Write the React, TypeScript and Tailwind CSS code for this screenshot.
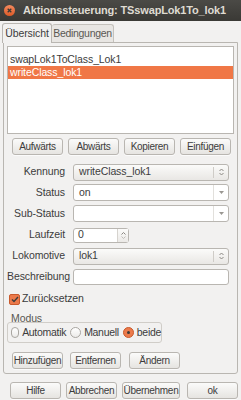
import React from "react";

const font = { fontFamily: '"Liberation Sans", Arial, sans-serif' };

function Btn({ children, w }: { children: React.ReactNode; w: string }) {
  return (
    <div
      className={`${w} h-[17px] flex items-center justify-center rounded-[3px] border border-[#b9b6b1] bg-gradient-to-b from-[#fbfbfa] to-[#e6e4e1] text-[#3c3c3c] text-[10px] tracking-[-0.3px] whitespace-nowrap shadow-[0_1px_0_rgba(255,255,255,0.7)]`}
    >
      {children}
    </div>
  );
}

function UpDown() {
  return (
    <svg width="5" height="8" viewBox="0 0 5 8">
      <path d="M0.5 3 L2.5 1 L4.5 3" fill="none" stroke="#8a8782" strokeWidth="1" />
      <path d="M0.5 5 L2.5 7 L4.5 5" fill="none" stroke="#8a8782" strokeWidth="1" />
    </svg>
  );
}

function Combo({ text }: { text: string }) {
  return (
    <div className="w-[156px] h-[17px] flex items-center rounded-[3px] border border-[#b9b6b1] bg-gradient-to-b from-[#fbfbfa] to-[#e9e7e4] text-[#3c3c3c]">
      <div className="flex-1 pl-[5px]">{text}</div>
      <div className="w-px h-[11px] bg-[#cfccc7]" />
      <div className="w-[14px] flex items-center justify-center">
        <UpDown />
      </div>
    </div>
  );
}

function EntryCombo({ text }: { text: string }) {
  return (
    <div className="w-[156px] h-[17px] flex items-center rounded-[3px] border border-[#b9b6b1] bg-white text-[#3c3c3c]">
      <div className="flex-1 pl-[5px]">{text}</div>
      <div className="w-[15px] h-full flex items-center justify-center border-l border-[#e2e0dc]">
        <svg width="5" height="3" viewBox="0 0 5 3">
          <path d="M0 0 L5 0 L2.5 3 Z" fill="#9a9792" />
        </svg>
      </div>
    </div>
  );
}

function Row({ label, children, h = "h-[20px]" }: { label: string; children: React.ReactNode; h?: string }) {
  return (
    <div className={`flex items-center ${h}`}>
      <div className="w-[66px] text-right text-[#3c3c3c] pr-[8px] whitespace-nowrap">{label}</div>
      {children}
    </div>
  );
}

function Radio({ checked }: { checked?: boolean }) {
  if (checked)
    return (
      <div className="w-[11px] h-[11px] rounded-full bg-[#ec7a4b] border border-[#c95a2c] flex items-center justify-center">
        <div className="w-[3px] h-[3px] rounded-full bg-[#3c3c3c]" />
      </div>
    );
  return <div className="w-[11px] h-[11px] rounded-full bg-gradient-to-b from-[#ffffff] to-[#ecebe9] border border-[#a9a6a1]" />;
}

export default function App() {
  return (
    <div
      className="w-[241px] h-[400px] bg-[#f2f1f0] flex flex-col text-[10.5px] tracking-[-0.1px] text-[#3c3c3c] overflow-hidden"
      style={font}
    >
      {/* Title bar */}
      <div className="h-[21px] shrink-0 flex items-center bg-gradient-to-b from-[#4b4a46] to-[#3a3935]">
        <div className="ml-[4px] w-[11px] h-[11px] rounded-full bg-gradient-to-b from-[#f58a5e] to-[#dd5a25] flex items-center justify-center">
          <svg width="5" height="5" viewBox="0 0 5 5">
            <path d="M0.7 0.7 L4.3 4.3 M4.3 0.7 L0.7 4.3" stroke="#3a3935" strokeWidth="1.3" />
          </svg>
        </div>
        <div className="ml-[8px] font-bold text-[#dfdbd2] text-[11px] tracking-[-0.15px] whitespace-nowrap">
          Aktionssteuerung: TSswapLok1To_lok1
        </div>
      </div>

      {/* Tabs */}
      <div className="flex items-end pl-[2px] mt-[1px] h-[20px] shrink-0">
        <div className="w-[50px] h-[20px] border border-b-0 border-[#b9b6b1] rounded-t-[3px] bg-[#f2f1f0] flex items-center justify-center relative top-px z-10">
          Übersicht
        </div>
        <div className="w-[62px] h-[18px] border border-b-0 border-l-0 border-[#c4c1bc] rounded-t-[3px] bg-[#e8e6e3] flex items-center justify-center text-[#5a5853] tracking-[-0.3px]">
          Bedingungen
        </div>
      </div>

      {/* Panel */}
      <div className="mx-[3px] h-[332px] shrink-0 border border-[#b9b6b1] rounded-b-[3px] flex flex-col px-[3px] pt-[3px]">
        {/* List */}
        <div className="h-[88px] border border-[#b9b6b1] bg-white flex flex-col pt-[6px]">
          <div className="h-[13px] flex items-center pl-[2px]">swapLok1ToClass_Lok1</div>
          <div className="h-[13px] flex items-center pl-[2px] bg-[#f07746] text-white">writeClass_lok1</div>
        </div>

        {/* Buttons row */}
        <div className="flex items-center mt-[4px] pl-[5px] gap-[5px]">
          <Btn w="w-[51px]">Aufwärts</Btn>
          <Btn w="w-[51px]">Abwärts</Btn>
          <Btn w="w-[51px]">Kopieren</Btn>
          <Btn w="w-[51px]">Einfügen</Btn>
        </div>

        {/* Form */}
        <div className="flex flex-col mt-[7px]">
          <Row label="Kennung">
            <Combo text="writeClass_lok1" />
          </Row>
          <Row label="Status" h="h-[21px]">
            <EntryCombo text="on" />
          </Row>
          <Row label="Sub-Status" h="h-[21px]">
            <EntryCombo text="" />
          </Row>
          <Row label="Laufzeit" h="h-[22px]">
            <div className="w-[56px] h-[15px] flex items-center rounded-[3px] border border-[#b9b6b1] bg-white">
              <div className="flex-1 pl-[4px]">0</div>
              <div className="w-[11px] h-full border-l border-[#d6d3ce] bg-gradient-to-b from-[#fbfbfa] to-[#ebe9e6] flex flex-col items-center justify-center gap-[1px]">
                <svg width="5" height="3" viewBox="0 0 5 3"><path d="M0.5 2.5 L2.5 0.5 L4.5 2.5" fill="none" stroke="#8a8782" /></svg>
                <svg width="5" height="3" viewBox="0 0 5 3"><path d="M0.5 0.5 L2.5 2.5 L4.5 0.5" fill="none" stroke="#c0bdb8" /></svg>
              </div>
            </div>
          </Row>
          <Row label="Lokomotive">
            <Combo text="lok1" />
          </Row>
          <Row label="Beschreibung" h="h-[22px]">
            <div className="w-[156px] h-[16px] rounded-[3px] border border-[#b9b6b1] bg-white" />
          </Row>
        </div>

        {/* Checkbox */}
        <div className="flex items-center mt-[4px] h-[14px] pl-[2px]">
          <div className="w-[11px] h-[11px] rounded-[2px] bg-[#ec7a4b] border border-[#c95a2c] flex items-center justify-center">
            <svg width="8" height="7" viewBox="0 0 8 7">
              <path d="M1 3.5 L3 5.5 L7 1" fill="none" stroke="#3c3c3c" strokeWidth="1.4" />
            </svg>
          </div>
          <span className="ml-[2px]">Zurücksetzen</span>
        </div>

        {/* Modus */}
        <div className="mt-[6px] pl-[4px] h-[12px] text-[#5a5853] leading-[12px]">Modus</div>
        <div className="w-[155px] h-[21px] mt-[-2px] border border-[#d0cdc8] rounded-[3px] flex items-center pl-[3px] whitespace-nowrap tracking-[-0.3px]">
          <Radio />
          <span className="ml-[3px]">Automatik</span>
          <span className="ml-[4px]"><Radio /></span>
          <span className="ml-[3px]">Manuell</span>
          <span className="ml-[4px]"><Radio checked /></span>
          <span className="ml-[3px]">beide</span>
        </div>

        {/* Bottom panel buttons */}
        <div className="flex items-center mt-[9px] pl-[5px]">
          <Btn w="w-[51px]">Hinzufügen</Btn>
          <div className="w-[7px]" />
          <Btn w="w-[51px]">Entfernen</Btn>
          <div className="w-[8px]" />
          <Btn w="w-[51px]">Ändern</Btn>
        </div>
      </div>

      {/* Dialog buttons */}
      <div className="flex items-center mt-[8px] pl-[10px]">
        <Btn w="w-[51px]">Hilfe</Btn>
        <div className="w-[5px]" />
        <Btn w="w-[51px]">Abbrechen</Btn>
        <div className="w-[5px]" />
        <Btn w="w-[58px]">Übernehmen</Btn>
        <div className="w-[7px]" />
        <Btn w="w-[51px]">ok</Btn>
      </div>
    </div>
  );
}
